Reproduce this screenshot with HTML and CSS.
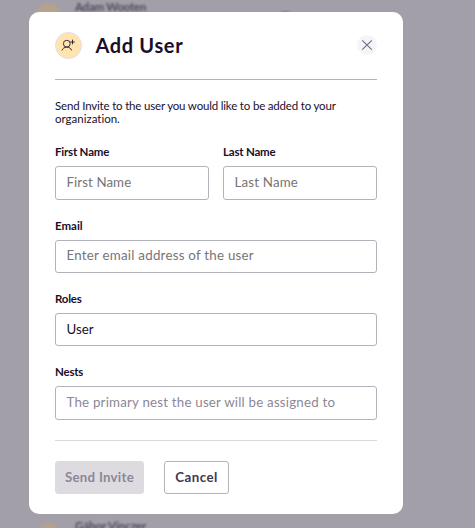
FILE: index.html
```html
<!DOCTYPE html>
<html lang="en">
<head>
<meta charset="utf-8">
<title>Add User</title>
<link rel="stylesheet" href="styles.css">
</head>
<body>
<div class="backdrop">
  <span class="dot dot-top"></span><span class="person person-top">Adam Wooten</span>
  <span class="speck"></span>
  <span class="dot dot-bottom"></span><span class="person person-bottom">Gábor Vinczer</span>
</div>
<main class="modal">
  <header class="header">
    <span class="badge">
      <svg width="15" height="13" viewBox="0 0 15 13" fill="none" stroke="#37263f" stroke-width="1">
        <circle cx="5.8" cy="4.7" r="3.4"/>
        <path d="M1 11.4C1.7 9.2 3.5 8.2 5.8 8.2s4.1 1 4.8 3.2M11.5 .7v4.6M9.2 3H13.8"/>
      </svg>
    </span>
    <h1 class="title">Add User</h1>
    <button class="close" aria-label="Close">
      <svg width="12" height="12" viewBox="0 0 12 12" fill="none" stroke="#6f6880" stroke-width="1.1"><path d="M1.2 1.4l9.6 9.2M10.8 1.4L1.2 10.6"/></svg>
    </button>
  </header>
  <p class="intro"><span class="intro-first">Send Invite to the user you would like to be added to your</span><br><span class="intro-second">organization.</span></p>
  <form class="form">
    <div class="row">
      <label class="field"><span class="label">First Name</span><span class="input"><span class="t-first">First Name</span></span></label>
      <label class="field"><span class="label">Last Name</span><span class="input"><span class="t-last">Last Name</span></span></label>
    </div>
    <label class="field"><span class="label l-email">Email</span><span class="input"><span class="t-email">Enter email address of the user</span></span></label>
    <label class="field"><span class="label">Roles</span><span class="input filled"><span>User</span></span></label>
    <label class="field"><span class="label">Nests</span><span class="input muted"><span class="t-nests">The primary nest the user will be assigned to</span></span></label>
  </form>
  <footer class="footer">
    <button class="button send"><span>Send Invite</span></button>
    <button class="button cancel"><span>Cancel</span></button>
  </footer>
</main>
</body>
</html>
```
FILE: styles.css
```css
* { box-sizing: border-box; }
body {
  margin: 0;
  height: 528px;
  overflow: hidden;
  position: relative;
  background: #a29fa9;
  font-family: Lato, "Liberation Sans", sans-serif;
  font-variant-ligatures: none;
  color: #1a0f2b;
}
.backdrop { position: absolute; inset: 0; filter: blur(1px); }
.dot { position: absolute; left: 36px; width: 25px; height: 25px; border-radius: 50%; background: #b5a28e; }
.dot-top { top: 3px; }
.dot-bottom { top: 523px; }
.person { position: absolute; left: 75px; font-size: 11.5px; line-height: 14px; font-weight: 700; letter-spacing: -.25px; color: #514a5c; white-space: nowrap; }
.person-top { top: 0; }
.person-bottom { top: 519px; letter-spacing: -.1px; }
.speck { position: absolute; left: 281px; top: 11px; width: 8px; height: 3px; background: #858091; }
.modal {
  position: relative;
  width: 374px;
  height: 502px;
  margin: 12px 0 0 29px;
  padding: 20px 26px;
  border-radius: 10px;
  background: #fff;
  display: flow-root;
}
.header { display: flex; height: 48px; border-bottom: 1px solid #b4b2b7; }
.badge {
  display: flex; align-items: center; justify-content: center;
  width: 27px; height: 27px; border-radius: 50%;
  background: #ffe4b0; border: 1px solid #e3dfe2;
}
.title { margin: 0 0 0 13.5px; font-size: 20px; line-height: 26px; font-weight: 700; letter-spacing: .65px; }
.close {
  display: flex; align-items: center; justify-content: center;
  width: 20px; height: 20px; margin: 3px 0 0 auto; padding: 0;
  border: 0; border-radius: 50%; background: #f5f4f7;
}
.intro { margin: 19px 0 0; font-size: 11.5px; line-height: 13px; white-space: nowrap; }
.intro-first { letter-spacing: -.18px; }
.form { display: flex; flex-direction: column; gap: 19px; margin-top: 20.33px; }
.row { display: grid; grid-template-columns: 1fr 1fr; gap: 14px; }
.field { display: block; }
.label { display: block; width: max-content; font-size: 11.5px; line-height: 14px; font-weight: 700; margin-bottom: 7px; letter-spacing: -.2px; }
.l-email { letter-spacing: 0; }
.input {
  display: flex; align-items: center; height: 33.33px; padding: 0 0 2px 10.5px;
  border: 1px solid #b3b1ba; border-radius: 3px;
  font-size: 13.3px; line-height: 16px; color: #757575; white-space: nowrap;
}
.t-first { letter-spacing: .08px; }
.t-last { letter-spacing: .18px; }
.t-email { letter-spacing: .25px; }
.t-nests { letter-spacing: .21px; }
.filled { color: #1a0f2b; }
.muted { color: #8c8796; }
.footer { display: flex; gap: 20px; margin-top: 20.34px; padding-top: 20px; border-top: 1px solid #dad9dc; }
.button {
  height: 33px; padding: 0; border: 1px solid #b3b1ba; border-radius: 3px;
  font: 700 13.3px/16px Lato, "Liberation Sans", sans-serif; background: #fff; color: #40384f;
}
.send { width: 89px; border-color: #dddbe0; background: #dddbe0; color: #8c8796; letter-spacing: .25px; }
.cancel { width: 65px; letter-spacing: .5px; }
```
